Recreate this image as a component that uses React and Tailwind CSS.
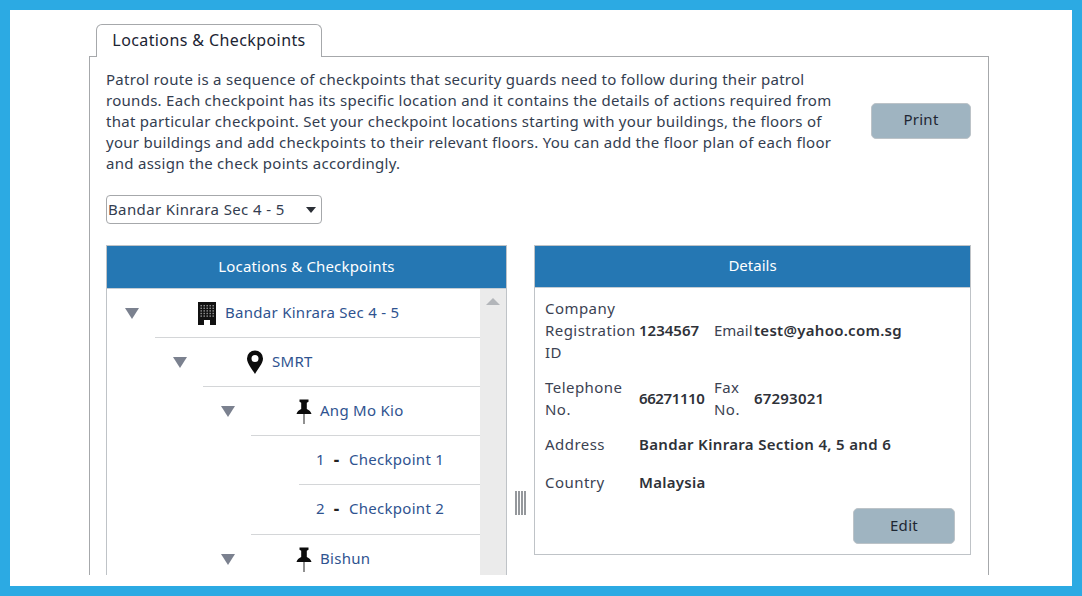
const F = "font-['Noto_Sans',sans-serif]";

function Arrow() {
  return (
    <svg width="14" height="11" viewBox="0 0 14 11" className="block">
      <polygon points="0,0 14,0 7,11" fill="#7b818f" />
    </svg>
  );
}

function Building() {
  const dots = [];
  for (let r = 0; r < 5; r++) for (let c = 0; c < 5; c++) dots.push([3.5 + c * 3, 4 + r * 2.6]);
  return (
    <svg width="20" height="25" viewBox="0 0 20 25" className="block">
      <path d="M1 1h18v23h-6v-5h-6v5H1z" fill="#111" />
      {dots.map(([x, y], i) => (
        <rect key={i} x={x} y={y} width="1.4" height="1.4" fill="#9a9a9a" />
      ))}
    </svg>
  );
}

function Marker() {
  return (
    <svg width="18" height="25" viewBox="-1 0 18 25" className="block">
      <path
        fillRule="evenodd"
        d="M8 0.500a8 8 0 0 1 8 8c0 5-5 10-8 15.500C5 19 0 13.500 0 8.500a8 8 0 0 1 8-8zm0 4.500a3.500 3.500 0 1 0 0 7 3.500 3.500 0 0 0 0-7z"
        fill="#0c0c0c"
      />
    </svg>
  );
}

function Pin() {
  return (
    <svg width="16" height="25" viewBox="0 0 16 25" className="block">
      <path d="M3.500 0.500h9v2.200l-1.700 1v6.200c2.400 1 4.200 2.800 4.700 5.100H.5c.5-2.300 2.300-4.100 4.700-5.100V3.700l-1.700-1z" fill="#0c0c0c" />
      <rect x="7.200" y="15" width="1.600" height="10" fill="#777" />
    </svg>
  );
}

function Row({ depth, icon, label, iconW = "w-[61px]", gap = "ml-[8px]" }) {
  return (
    <div className="flex items-center h-[49px]" style={{ paddingLeft: depth * 48 }}>
      <div className="w-[48px] shrink-0 flex justify-center pl-[1px]"><Arrow /></div>
      <div className="flex-1 h-[49px] flex items-center border-b border-[#d4d6d8]">
        <div className={`${iconW} flex justify-end shrink-0`}>{icon}</div>
        <span className={`${gap} pb-[2px] text-[#2f5390]`}>{label}</span>
      </div>
    </div>
  );
}

function Checkpoint({ number, label, outer, inner, h }) {
  return (
    <div className={`flex ${h} ${outer}`}>
      <div className={`flex-1 border-b border-[#d4d6d8] ${inner} flex items-center pb-[2px] text-[#2f5390]`}>
        <span className="w-[30px] pl-[17px]">{number}</span>
        <span className="w-[15px] text-[#222] font-bold text-center text-[17px]">-</span>
        <span className="ml-[5px]">{label}</span>
      </div>
    </div>
  );
}

const Label = ({ children, className = "" }) => (
  <td className={`align-middle text-[#3b4252] tracking-[0.45px] ${className}`}>{children}</td>
);
const Value = ({ children, colSpan, className = "" }) => (
  <td colSpan={colSpan} className={`align-middle font-semibold text-[#2e3138] ${className}`}>{children}</td>
);

export default function App() {
  return (
    <div className={`${F} w-[1082px] h-[596px] border-[10px] border-[#2caae3] bg-white text-[15px] leading-[21px] tracking-[0.28px] text-[#333d50]`}>
      <div className="ml-[79px] w-[900px] h-[565px] overflow-hidden pt-[14px]">
        <div className="relative z-10 ml-[7px] w-[226px] h-[33px] -mb-px border border-b-0 border-[#a6a8ab] rounded-t-[6px] bg-white flex items-center justify-center pb-[2px] text-[#1b2433] text-[16px] tracking-[0.4px]">
          Locations &amp; Checkpoints
        </div>
        <div className="border border-[#a6a8ab] pt-[12px] pl-4 pr-[17px] h-[600px]">
          <div className="flex items-center">
            <p className="w-[765px]">
              Patrol route is a sequence of checkpoints that security guards need to follow during their patrol<br />
              rounds. Each checkpoint has its specific location and it contains the details of actions required from<br />
              that particular checkpoint. Set your checkpoint locations starting with your buildings, the floors of<br />
              your buildings and add checkpoints to their relevant floors. You can add the floor plan of each floor<br />
              and assign the check points accordingly.
            </p>
            <button className="ml-auto w-[100px] h-[36px] mb-[2px] rounded-[5px] border border-[#bcc3c8] bg-[#9fb4c1] text-[#1e2733] pb-[2px]">Print</button>
          </div>
          <div className="mt-[21px] w-[216px] h-[29px] border border-[#a6a8ab] rounded-[4px] flex items-center pl-[1px] pr-[5px] justify-between tracking-[0.37px]">
            <span>Bandar Kinrara Sec 4 - 5</span>
            <svg width="10" height="6" viewBox="0 0 10 6"><polygon points="0,0 10,0 5,6" fill="#2b2f36" /></svg>
          </div>
          <div className="mt-[21px] flex items-start">
            <div className="w-[401px] shrink-0 border-x border-t border-[#bfc3c7]">
              <div className="h-[43px] bg-[#2577b3] border-b border-[#c5cdd4] flex items-center justify-center pb-[2px] text-white tracking-[0.16px]">Locations &amp; Checkpoints</div>
              <div className="flex h-[300px]">
                <div className="flex-1 min-w-0">
                  <Row depth={0} icon={<Building />} label="Bandar Kinrara Sec 4 - 5" iconW="w-[62px]" />
                  <Row depth={1} icon={<Marker />} label="SMRT" />
                  <Row depth={2} icon={<Pin />} label="Ang Mo Kio" />
                  <Checkpoint outer="pl-[192px]" inner="" h="h-[49px]" number="1" label="Checkpoint 1" />
                  <Checkpoint outer="pl-[144px]" inner="pl-[48px]" h="h-[50px]" number="2" label="Checkpoint 2" />
                  <Row depth={2} icon={<Pin />} label="Bishun" />
                </div>
                <div className="w-[26px] shrink-0 bg-[#ebebeb] flex justify-center pt-[9px] pr-[1px]">
                  <svg width="14" height="7" viewBox="0 0 14 7" className="block"><polygon points="0,7 14,7 7,0" fill="#b3b6ba" /></svg>
                </div>
              </div>
            </div>
            <div className="flex-1 flex justify-center pt-[246px]">
              <div className="w-[12px] h-[24px] flex justify-between">
                <div className="w-[2px] bg-[#95989c]" />
                <div className="w-[2px] bg-[#95989c]" />
                <div className="w-[2px] bg-[#95989c]" />
                <div className="w-[2px] bg-[#95989c]" />
              </div>
            </div>
            <div className="w-[437px] shrink-0 h-[310px] border border-[#bfc3c7]">
              <div className="h-[42px] bg-[#2577b3] border-b border-[#c5cdd4] flex items-center justify-center pb-[2px] text-white tracking-normal">Details</div>
              <div className="pl-[10px] pt-[9px] leading-[22px]">
                <table className="border-collapse">
                  <tbody>
                    <tr className="[&>td]:pb-[13px]">
                      <Label className="w-[94px]">Company<br />Registration<br />ID</Label>
                      <Value className="tracking-normal"><span className="block w-[75px]">1234567</span></Value>
                      <Label className="w-[40px] tracking-normal">Email</Label>
                      <Value>test@yahoo.com.sg</Value>
                    </tr>
                    <tr className="[&>td]:pb-[13px]">
                      <Label>Telephone<br />No.</Label>
                      <Value className="tracking-[-0.4px]">66271110</Value>
                      <Label>Fax<br />No.</Label>
                      <Value className="tracking-[0.2px]">67293021</Value>
                    </tr>
                    <tr className="[&>td]:pb-[16px]">
                      <Label>Address</Label>
                      <Value colSpan={3} className="tracking-[0.33px]">Bandar Kinrara Section 4, 5 and 6</Value>
                    </tr>
                    <tr>
                      <Label>Country</Label>
                      <Value colSpan={3}>Malaysia</Value>
                    </tr>
                  </tbody>
                </table>
              </div>
              <div className="flex justify-end pr-[15px] mt-[15px]">
                <button className="w-[102px] h-[36px] rounded-[5px] border border-[#bcc3c8] bg-[#9fb4c1] text-[#1e2733] pb-[2px]">Edit</button>
              </div>
            </div>
          </div>
        </div>
      </div>
    </div>
  );
}
